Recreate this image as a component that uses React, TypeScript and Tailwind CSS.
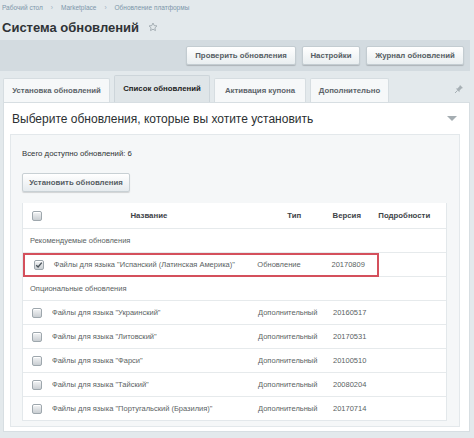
import React from 'react';

type Row = { name: string; type: string; version: string; checked?: boolean };

const recommended: Row[] = [
  { name: 'Файлы для языка "Испанский (Латинская Америка)"', type: 'Обновление', version: '20170809', checked: true }
];

const optional: Row[] = [
  { name: 'Файлы для языка "Украинский"', type: 'Дополнительный', version: '20160517' },
  { name: 'Файлы для языка "Литовский"', type: 'Дополнительный', version: '20170531' },
  { name: 'Файлы для языка "Фарси"', type: 'Дополнительный', version: '20100510' },
  { name: 'Файлы для языка "Тайский"', type: 'Дополнительный', version: '20080204' },
  { name: 'Файлы для языка "Португальский (Бразилия)"', type: 'Дополнительный', version: '20170714' }
];

const Checkbox = ({ checked = false }: { checked?: boolean }) => (
  <span className="flex h-[10px] w-[10px] items-center justify-center rounded-[2px] border border-[#9ea7ad] bg-gradient-to-b from-[#f4f5f6] to-[#c9ced2] shadow-[inset_0_1px_0_#fff]">
    {checked && (
      <svg width="8" height="8" viewBox="0 0 8 8">
        <path d="M1.2 4.2 L3.1 6 L6.8 1.6" fill="none" stroke="#4a545b" strokeWidth="1.4" />
      </svg>
    )}
  </span>
);

const ToolButton = ({ label, w }: { label: string; w: string }) => (
  <button className={`h-[19px] rounded-[2px] border border-[#c3ccd1] bg-gradient-to-b from-white to-[#e9eef0] text-[7.8px] font-bold text-[#555d63] shadow-[0_1px_1px_rgba(0,0,0,0.18)] ${w}`}>
    {label}
  </button>
);

const Tab = ({ label, active = false, w }: { label: string; active?: boolean; w: string }) => (
  <div
    className={`flex items-center justify-center rounded-t-[2px] border border-b-0 text-[7.8px] font-bold ${w} ${
      active ? 'h-[27px] border-[#cdd5da] bg-[#dfe5e8] text-[#222]' : 'h-[24px] border-[#d6dde1] bg-[#f6f8f9] text-[#5c6469]'
    }`}
  >
    {label}
  </div>
);

const ItemRow = ({ row }: { row: Row }) => {
  const cells = (
    <>
      <div className="flex w-[28px] items-center justify-center">
        <Checkbox checked={row.checked} />
      </div>
      <div className="w-[207px] truncate pl-[1px]">{row.name}</div>
      <div className="w-[75px]">{row.type}</div>
      <div className="w-[46px]">{row.version}</div>
    </>
  );
  return (
    <div className="flex h-[24px] items-center border-t border-[#e6eaec] bg-white text-[7.5px] text-[#5a5f63]">
      {row.checked ? (
        <div className="flex h-[24px] w-[356px] items-center border-2 border-[#d4505c]">{cells}</div>
      ) : (
        <div className="flex w-[356px] items-center">{cells}</div>
      )}
      <div className="w-[69px]" />
    </div>
  );
};

const GroupRow = ({ label }: { label: string }) => (
  <div className="flex h-[24px] items-center border-t border-[#e6eaec] bg-white pl-[7px] text-[7.5px] text-[#5a5f63]">{label}</div>
);

export default function App() {
  return (
    <div className="h-[438px] w-[474px] overflow-hidden bg-[#e3e9ec] font-['Liberation_Sans',Arial,sans-serif]">
      <div className="flex h-[14px] items-center gap-[8px] pl-[2px] pt-[1px] text-[6.5px] text-[#7d96aa]">
        <span>Рабочий стол</span>
        <span className="text-[#9db0bf]">›</span>
        <span>Marketplace</span>
        <span className="text-[#9db0bf]">›</span>
        <span>Обновление платформы</span>
      </div>

      <div className="flex h-[26px] items-center gap-[9px] pl-[2px]">
        <h1 className="text-[13px] font-bold leading-none text-[#2f3336]">Система обновлений</h1>
        <svg width="10" height="10" viewBox="0 0 24 24">
          <path
            d="M12 2.5l2.9 6.1 6.6.8-4.9 4.6 1.3 6.6L12 17.3l-5.9 3.3 1.3-6.6-4.9-4.6 6.6-.8z"
            fill="none"
            stroke="#9aa4aa"
            strokeWidth="2"
            strokeLinejoin="round"
          />
        </svg>
      </div>

      <div className="mr-[4px] flex h-[31px] items-center justify-end gap-[6px] bg-[#d3dbe0] pr-[6px]">
        <ToolButton label="Проверить обновления" w="w-[110px]" />
        <ToolButton label="Настройки" w="w-[58px]" />
        <ToolButton label="Журнал обновлений" w="w-[98px]" />
      </div>

      <div className="mt-[4px] flex h-[27px] items-end gap-[4px] pl-[3px] pr-[10px]">
        <Tab label="Установка обновлений" w="w-[107px]" />
        <Tab label="Список обновлений" active w="w-[96px]" />
        <Tab label="Активация купона" w="w-[92px]" />
        <Tab label="Дополнительно" w="w-[79px]" />
        <div className="ml-auto self-center">
          <svg width="10" height="10" viewBox="0 0 10 10">
            <path d="M6 1 L9 4 L7.5 4.6 L5.6 6.6 L5.4 8.2 L1.8 4.6 L3.4 4.4 L5.4 2.5z" fill="#a7b0b5" />
            <path d="M3.6 6.4 L1 9" stroke="#a7b0b5" strokeWidth="1" />
          </svg>
        </div>
      </div>

      <div className="ml-[3px] mr-[4px] h-[330px] border border-[#d7dee2] bg-white">
        <div className="flex h-[31px] items-center justify-between pl-[8px] pr-[12px]">
          <span className="text-[12px] text-[#2b2f32]">Выберите обновления, которые вы хотите установить</span>
          <svg width="10" height="6" viewBox="0 0 10 6">
            <path d="M0 0 H10 L5 5z" fill="#a5adb2" />
          </svg>
        </div>

        <div className="ml-[6px] mr-[9px] h-[293px] border border-[#e3e8eb] bg-[#f5f7f8] pl-[11px] pt-[13px]">
          <div className="text-[7.8px] text-[#2f3336]">Всего доступно обновлений: 6</div>
          <div className="mt-[8px]">
            <button className="h-[19px] w-[108px] rounded-[2px] border border-[#c8d0d4] bg-gradient-to-b from-white to-[#e6ebee] text-[7.8px] font-bold text-[#555d63] shadow-[0_1px_1px_rgba(0,0,0,0.15)]">
              Установить обновления
            </button>
          </div>

          <div className="mt-[11px] w-[425px] border-x border-b border-[#e3e8eb] bg-white">
            <div className="flex h-[25px] items-center bg-white text-[7.8px] font-bold text-[#3d4347]">
              <div className="flex w-[28px] items-center justify-center">
                <Checkbox />
              </div>
              <div className="w-[207px] pr-[10px] text-center">Название</div>
              <div className="w-[75px] text-center">Тип</div>
              <div className="w-[46px] pl-[1px]">Версия</div>
              <div className="w-[69px] pl-[1px]">Подробности</div>
            </div>
            <GroupRow label="Рекомендуемые обновления" />
            {recommended.map((r) => (
              <ItemRow key={r.name} row={r} />
            ))}
            <GroupRow label="Опциональные обновления" />
            {optional.map((r) => (
              <ItemRow key={r.name} row={r} />
            ))}
          </div>
        </div>
      </div>
    </div>
  );
}
